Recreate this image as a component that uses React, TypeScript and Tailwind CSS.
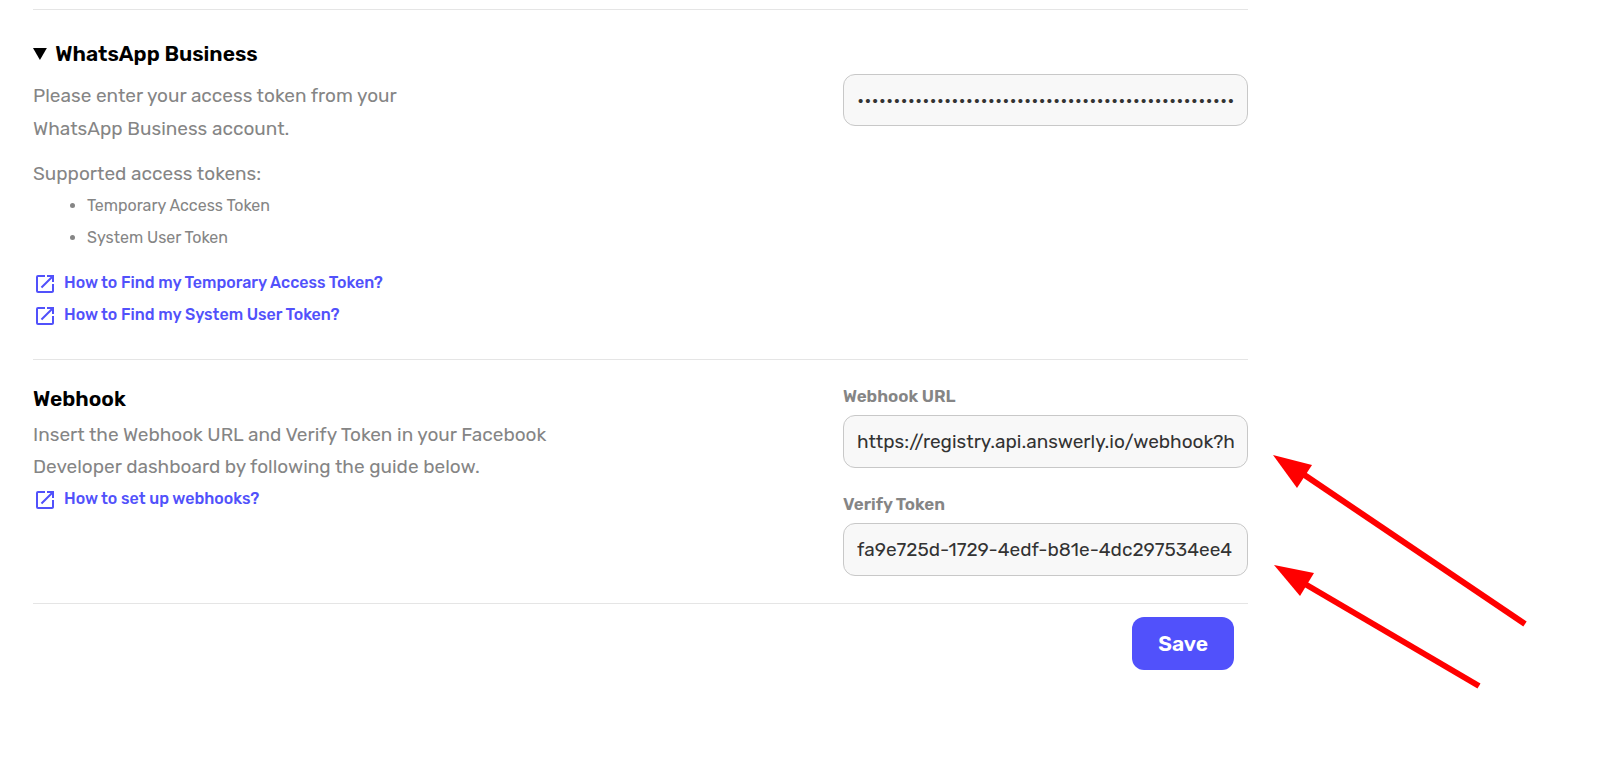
import { useState } from "react";
import type { ReactNode } from "react";
import { MdOpenInNew } from "react-icons/md";

const inputClass =
  "block w-full rounded-xl border border-[#c8c8c8] bg-[#f8f8f8] px-[13px] text-[#333] outline-none focus:border-[#5151fb]";

function GuideLink({ href, children }: { href: string; children: ReactNode }) {
  return (
    <a
      href={href}
      className="flex w-fit items-start gap-[7px] text-[16px] leading-8 font-medium text-[#5151fb] hover:underline"
    >
      <MdOpenInNew className="mt-[5px] size-6 shrink-0" />
      {children}
    </a>
  );
}

function Field({ id, label, value }: { id: string; label: string; value: string }) {
  return (
    <div>
      <label htmlFor={id} className="mb-[7px] block text-[17px] leading-6 font-semibold">
        {label}
      </label>
      <input id={id} readOnly className={`${inputClass} h-[53px]`} value={value} />
    </div>
  );
}

export default function App() {
  const [accessToken, setAccessToken] = useState("x".repeat(52));

  return (
    <div className="flex items-start bg-white pl-[33px] font-['Rubik',Roboto,sans-serif] text-[19px] text-[#858585]">
      <form className="min-w-0 flex-1 pt-[9px]" onSubmit={(e) => e.preventDefault()}>
        {/* WhatsApp Business */}
        <section className="grid grid-cols-3 border-t border-[#e5e5e5] pt-7 pb-[28px]">
          <details open className="col-span-2">
            <summary className="cursor-pointer text-[21px] leading-8 font-semibold text-black">
              WhatsApp Business
            </summary>
            <p className="mt-[9px] max-w-[400px] leading-[33px]">
              Please enter your access token from your WhatsApp Business account.
            </p>
            <p className="mt-[13px] leading-8">Supported access tokens:</p>
            <ul className="list-disc pl-[54px] text-[16px] leading-8">
              <li>Temporary Access Token</li>
              <li>System User Token</li>
            </ul>
            <div className="mt-[13px]">
              <GuideLink href="#temporary-token">How to Find my Temporary Access Token?</GuideLink>
              <GuideLink href="#system-token">How to Find my System User Token?</GuideLink>
            </div>
          </details>
          <div className="pt-9">
            <input
              type="password"
              aria-label="Access token"
              className={`${inputClass} h-[52px]`}
              value={accessToken}
              onChange={(e) => setAccessToken(e.target.value)}
            />
          </div>
        </section>

        {/* Webhook */}
        <section className="grid grid-cols-3 border-t border-[#e5e5e5] pt-[23px] pb-[27px]">
          <div className="col-span-2">
            <h2 className="text-[21px] leading-8 font-semibold text-black">Webhook</h2>
            <p className="mt-1 max-w-[540px] leading-8">
              Insert the Webhook URL and Verify Token in your Facebook Developer dashboard by
              following the guide below.
            </p>
            <GuideLink href="#webhooks">How to set up webhooks?</GuideLink>
          </div>
          <div className="space-y-6 pt-px">
            <Field id="webhook-url" label="Webhook URL" value="https://registry.api.answerly.io/webhook?h" />
            <Field id="verify-token" label="Verify Token" value="fa9e725d-1729-4edf-b81e-4dc297534ee4" />
          </div>
        </section>

        <div className="flex justify-end border-t border-[#e5e5e5] pt-[13px] pr-[14px]">
          <button
            type="submit"
            className="h-[53px] rounded-xl bg-[#5151fb] px-[26px] text-[21px] font-semibold text-white"
          >
            Save
          </button>
        </div>
      </form>

      {/* Arrows pointing at the webhook fields */}
      <div className="w-[370px] shrink-0 pt-[455px] pl-[24px]">
        <svg width="256" height="236" viewBox="0 0 256 236" fill="#f00" stroke="#f00" aria-hidden="true">
          <path d="M31 19 253 169" strokeWidth="6" />
          <path d="M1 0 40 10 25 33Z" stroke="none" />
          <path d="M33 129 207 231" strokeWidth="6" />
          <path d="M2 110 42 118 28 141Z" stroke="none" />
        </svg>
      </div>
    </div>
  );
}
